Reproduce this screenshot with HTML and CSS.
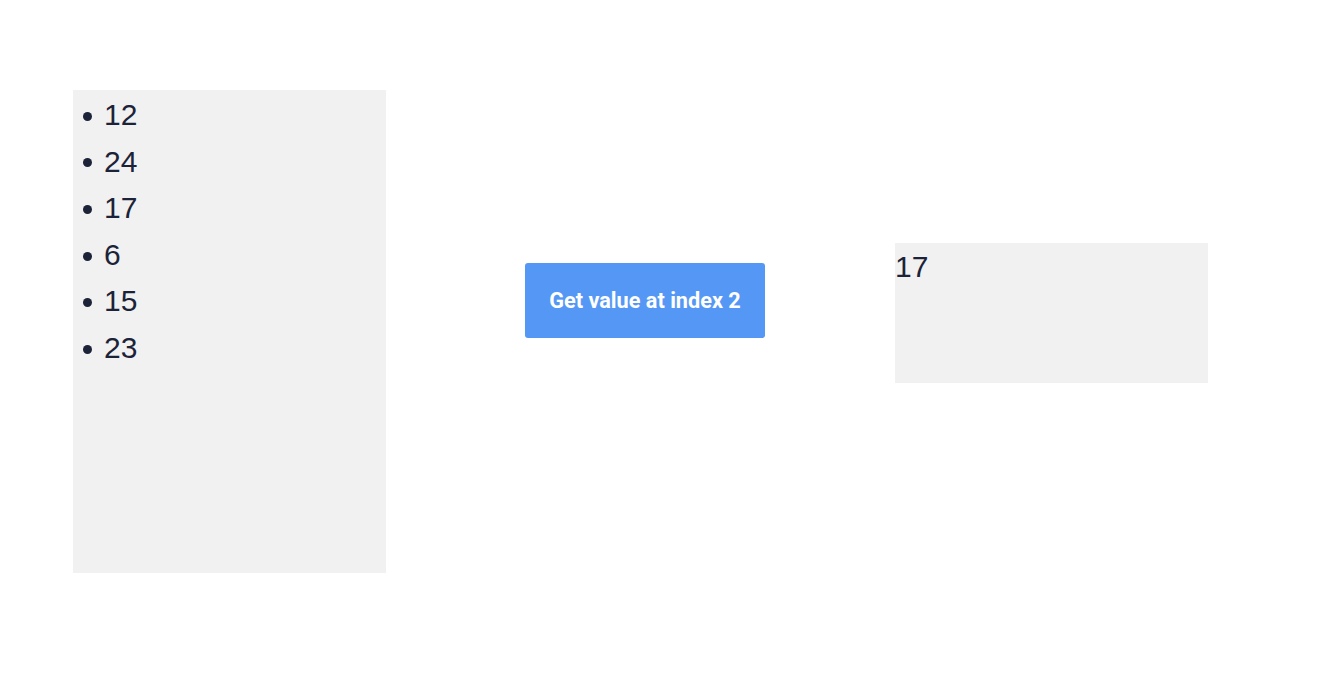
FILE: index.html
```html
<!DOCTYPE html>
<html>
<head>
<meta charset="utf-8">
<link rel="stylesheet" href="styles.css">
</head>
<body>
<main class="row">
  <ul class="list-panel">
    <li class="list-item">12</li>
    <li class="list-item">24</li>
    <li class="list-item">17</li>
    <li class="list-item">6</li>
    <li class="list-item">15</li>
    <li class="list-item">23</li>
  </ul>
  <button class="action-btn" type="button">Get value at index 2</button>
  <div class="result-box">17</div>
</main>
</body>
</html>
```

FILE: styles.css
```css
html, body {
  margin: 0;
  padding: 0;
  background: #ffffff;
}

body {
  font-family: "Liberation Sans", Arial, sans-serif;
  font-size: 30px;
  line-height: 46.6px;
  color: #1c2338;
}

.row {
  display: flex;
  align-items: flex-start;
  padding: 90px 0 0 73px;
}

.list-panel {
  width: 313px;
  height: 483px;
  margin: 0;
  padding: 2px 0 0 10px;
  box-sizing: border-box;
  background: #f1f1f1;
  list-style: none;
}

.list-item {
  display: flex;
  align-items: center;
}

.list-item::before {
  content: "";
  flex: none;
  width: 9px;
  height: 9px;
  margin: 2px 12px 0 0;
  border-radius: 50%;
  background: currentColor;
}

.action-btn {
  width: 240px;
  height: 75px;
  margin: 173px 0 0 139px;
  padding: 0;
  border: none;
  border-radius: 3px;
  background: #5597f5;
  color: #ffffff;
  font-family: Roboto, "Liberation Sans", sans-serif;
  font-weight: 700;
  font-size: 21.7px;
  line-height: 1;
  cursor: pointer;
}

.result-box {
  width: 313px;
  height: 140px;
  margin: 153px 0 0 130px;
  padding-top: 1px;
  box-sizing: border-box;
  background: #f1f1f1;
}
```
